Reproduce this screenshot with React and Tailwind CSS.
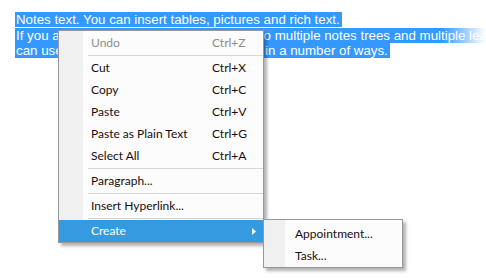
const MENU = [
  { label: 'Undo', shortcut: 'Ctrl+Z', disabled: true },
  { sep: true },
  { label: 'Cut', shortcut: 'Ctrl+X' },
  { label: 'Copy', shortcut: 'Ctrl+C' },
  { label: 'Paste', shortcut: 'Ctrl+V' },
  { label: 'Paste as Plain Text', shortcut: 'Ctrl+G' },
  { label: 'Select All', shortcut: 'Ctrl+A' },
  { sep: true },
  { label: 'Paragraph...' },
  { sep: true },
  { label: 'Insert Hyperlink...' },
  { sep: true },
  { label: 'Create', submenu: true, active: true },
]

const LINES = [
  'Notes text. You can insert tables, pictures and rich text.',
  'If you are using databases you can link it to multiple notes trees and multiple leaves of the notes.',
  'can use these items together or separate, in a number of ways.',
]

function MenuItem({ item }) {
  if (item.sep) {
    return (
      <div className="h-[3px] flex items-center pl-[29px]">
        <div className="h-px flex-1 bg-[#d7d7d7]" />
      </div>
    )
  }
  return (
    <div
      className={
        'h-[22px] flex items-center pl-[32px] leading-[22px] ' +
        (item.active ? 'bg-[#359ae0] text-white' : item.disabled ? 'text-[#8d8d8d]' : 'text-[#1a0d0d]')
      }
    >
      <span className="w-[121px]">{item.label}</span>
      {item.shortcut && <span>{item.shortcut}</span>}
      {item.submenu && (
        <svg className="ml-auto mr-[7px]" width="4" height="7" viewBox="0 0 4 7">
          <path d="M0 0 L4 3.5 L0 7 Z" fill="#ffffff" />
        </svg>
      )}
    </div>
  )
}

export default function App() {
  return (
    <div className="relative w-[486px] h-[278px] bg-white overflow-hidden">
      {/* Notes editor */}
      <div
        className="pt-[12px] pl-[15px] text-[13.3px] leading-[15.5px] text-white whitespace-nowrap"
        style={{ fontFamily: '"Liberation Sans", Arial, sans-serif' }}
      >
        {LINES.map((l) => (
          <div key={l}>
            <span className="bg-[#3399ff] pl-px pr-[2px]">{l}</span>
          </div>
        ))}
      </div>
      <div className="absolute top-0 right-0 w-[44px] h-[70px] bg-gradient-to-r from-white/0 to-white" />

      {/* Context menu */}
      <div
        className="absolute left-[58px] top-[30px] w-[206px] border border-[#979797] pt-px bg-[linear-gradient(to_right,#f0f0f0_24px,#fcfcfc_24px)] shadow-[3px_3px_3px_rgba(0,0,0,0.3)] text-[12px]"
        style={{ fontFamily: 'Lato, "Noto Sans", sans-serif' }}
      >
        {MENU.map((item, i) => (
          <MenuItem key={i} item={item} />
        ))}
      </div>

      {/* Submenu */}
      <div
        className="absolute left-[263px] top-[219px] w-[140px] border border-[#979797] pt-[3px] bg-[linear-gradient(to_right,#f0f0f0_21px,#fcfcfc_21px)] shadow-[3px_3px_3px_rgba(0,0,0,0.3)] text-[12px] text-[#1a0d0d]"
        style={{ fontFamily: 'Lato, "Noto Sans", sans-serif' }}
      >
        <div className="h-[22px] leading-[22px] pl-[31px]">Appointment...</div>
        <div className="h-[22px] leading-[22px] pl-[31px]">Task...</div>
      </div>
    </div>
  )
}
